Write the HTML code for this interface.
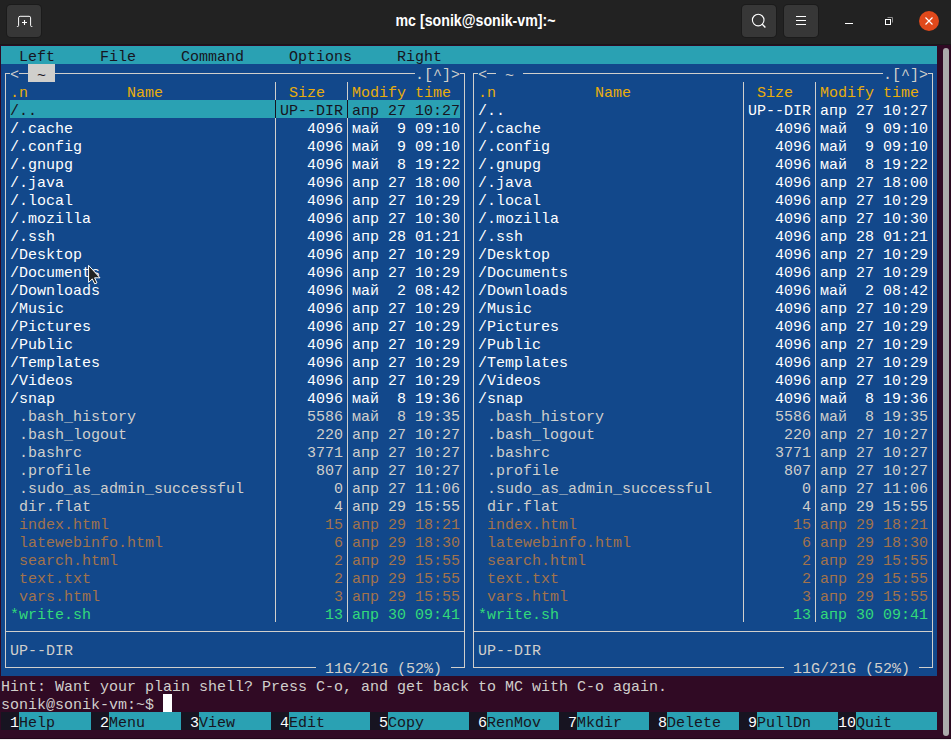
<!DOCTYPE html>
<html><head><meta charset="utf-8"><title>mc</title>
<style>
html,body{margin:0;padding:0;}
body{width:951px;height:740px;overflow:hidden;background:#300A24;position:relative;font-family:"Liberation Mono",monospace;}
.b{position:absolute;}
.t{position:absolute;white-space:pre;font-family:"Liberation Mono",monospace;font-size:15px;line-height:18px;height:18px;padding-top:3px;box-sizing:content-box;letter-spacing:0;}
#tb{position:absolute;left:0;top:0;width:951px;height:44px;background:#222222;}
#tbl{position:absolute;left:0;top:44px;width:951px;height:1px;background:#181818;}
.btn{position:absolute;top:5px;width:34px;height:32px;background:#373737;border-radius:4px;box-shadow:0 0 0 1px #1b1b1b;}
#title{position:absolute;left:0;width:951px;top:11px;text-align:center;font-family:"Liberation Sans",sans-serif;font-weight:bold;font-size:16px;line-height:20px;color:#fff;transform:scaleX(0.887);transform-origin:475.8px 0;}
svg{position:absolute;left:0;top:0;}
</style></head><body>
<div id="tb"></div><div id="tbl"></div>
<div class="btn" style="left:7px"></div>
<div class="btn" style="left:742px"></div>
<div class="btn" style="left:784px"></div>
<div id="title">mc [sonik@sonik-vm]:~</div>
<svg width="951" height="46" viewBox="0 0 951 46" fill="none" stroke="#fff" stroke-width="1.1">
<path d="M16.9 26.5h.7q1 0 1-1v-7.7q0-1.5 1.5-1.5h9q1.5 0 1.5 1.5v7.7q0 1 1 1h.7" stroke-width="1"/>
<path d="M22 22.5h5M24.5 20v5"/>
<circle cx="758.2" cy="20.1" r="5.8"/>
<path d="M762.2 24.2l3.2 3.2" stroke-width="1.4"/>
<path d="M796 16.5h10M796 20.5h10M796 24.5h10" stroke-width="1"/>
<path d="M845 23.5h8" stroke-width="1"/>
<path d="M887.5 17.5h5v5" stroke="#8a8a8a" stroke-width="1"/>
<rect x="885.5" y="19.5" width="5" height="5" stroke-width="1"/>
<circle cx="929" cy="21" r="10" fill="#E0491B" stroke="none"/>
<path d="M925.5 17.5l7 7M932.5 17.5l-7 7" stroke-width="1.15"/>
</svg>
<div class="b" style="left:1px;top:46px;width:936px;height:18px;background:#2AA1B3"></div>
<div class="b" style="left:1px;top:64px;width:27px;height:18px;background:#12488B"></div>
<div class="b" style="left:28px;top:64px;width:27px;height:18px;background:#D0CFCC"></div>
<div class="b" style="left:55px;top:64px;width:882px;height:18px;background:#12488B"></div>
<div class="b" style="left:1px;top:82px;width:936px;height:18px;background:#12488B"></div>
<div class="b" style="left:1px;top:100px;width:9px;height:18px;background:#12488B"></div>
<div class="b" style="left:10px;top:100px;width:450px;height:18px;background:#2AA1B3"></div>
<div class="b" style="left:460px;top:100px;width:477px;height:18px;background:#12488B"></div>
<div class="b" style="left:1px;top:118px;width:936px;height:18px;background:#12488B"></div>
<div class="b" style="left:1px;top:136px;width:936px;height:18px;background:#12488B"></div>
<div class="b" style="left:1px;top:154px;width:936px;height:18px;background:#12488B"></div>
<div class="b" style="left:1px;top:172px;width:936px;height:18px;background:#12488B"></div>
<div class="b" style="left:1px;top:190px;width:936px;height:18px;background:#12488B"></div>
<div class="b" style="left:1px;top:208px;width:936px;height:18px;background:#12488B"></div>
<div class="b" style="left:1px;top:226px;width:936px;height:18px;background:#12488B"></div>
<div class="b" style="left:1px;top:244px;width:936px;height:18px;background:#12488B"></div>
<div class="b" style="left:1px;top:262px;width:936px;height:18px;background:#12488B"></div>
<div class="b" style="left:1px;top:280px;width:936px;height:18px;background:#12488B"></div>
<div class="b" style="left:1px;top:298px;width:936px;height:18px;background:#12488B"></div>
<div class="b" style="left:1px;top:316px;width:936px;height:18px;background:#12488B"></div>
<div class="b" style="left:1px;top:334px;width:936px;height:18px;background:#12488B"></div>
<div class="b" style="left:1px;top:352px;width:936px;height:18px;background:#12488B"></div>
<div class="b" style="left:1px;top:370px;width:936px;height:18px;background:#12488B"></div>
<div class="b" style="left:1px;top:388px;width:936px;height:18px;background:#12488B"></div>
<div class="b" style="left:1px;top:406px;width:936px;height:18px;background:#12488B"></div>
<div class="b" style="left:1px;top:424px;width:936px;height:18px;background:#12488B"></div>
<div class="b" style="left:1px;top:442px;width:936px;height:18px;background:#12488B"></div>
<div class="b" style="left:1px;top:460px;width:936px;height:18px;background:#12488B"></div>
<div class="b" style="left:1px;top:478px;width:936px;height:18px;background:#12488B"></div>
<div class="b" style="left:1px;top:496px;width:936px;height:18px;background:#12488B"></div>
<div class="b" style="left:1px;top:514px;width:936px;height:18px;background:#12488B"></div>
<div class="b" style="left:1px;top:532px;width:936px;height:18px;background:#12488B"></div>
<div class="b" style="left:1px;top:550px;width:936px;height:18px;background:#12488B"></div>
<div class="b" style="left:1px;top:568px;width:936px;height:18px;background:#12488B"></div>
<div class="b" style="left:1px;top:586px;width:936px;height:18px;background:#12488B"></div>
<div class="b" style="left:1px;top:604px;width:936px;height:18px;background:#12488B"></div>
<div class="b" style="left:1px;top:622px;width:936px;height:18px;background:#12488B"></div>
<div class="b" style="left:1px;top:640px;width:936px;height:18px;background:#12488B"></div>
<div class="b" style="left:1px;top:658px;width:936px;height:18px;background:#12488B"></div>
<div class="b" style="left:163px;top:694px;width:9px;height:18px;background:#FFFFFF"></div>
<div class="b" style="left:1px;top:712px;width:18px;height:18px;background:#171421"></div>
<div class="b" style="left:19px;top:712px;width:72px;height:18px;background:#2AA1B3"></div>
<div class="b" style="left:91px;top:712px;width:18px;height:18px;background:#171421"></div>
<div class="b" style="left:109px;top:712px;width:72px;height:18px;background:#2AA1B3"></div>
<div class="b" style="left:181px;top:712px;width:18px;height:18px;background:#171421"></div>
<div class="b" style="left:199px;top:712px;width:72px;height:18px;background:#2AA1B3"></div>
<div class="b" style="left:271px;top:712px;width:18px;height:18px;background:#171421"></div>
<div class="b" style="left:289px;top:712px;width:81px;height:18px;background:#2AA1B3"></div>
<div class="b" style="left:370px;top:712px;width:18px;height:18px;background:#171421"></div>
<div class="b" style="left:388px;top:712px;width:81px;height:18px;background:#2AA1B3"></div>
<div class="b" style="left:469px;top:712px;width:18px;height:18px;background:#171421"></div>
<div class="b" style="left:487px;top:712px;width:72px;height:18px;background:#2AA1B3"></div>
<div class="b" style="left:559px;top:712px;width:18px;height:18px;background:#171421"></div>
<div class="b" style="left:577px;top:712px;width:72px;height:18px;background:#2AA1B3"></div>
<div class="b" style="left:649px;top:712px;width:18px;height:18px;background:#171421"></div>
<div class="b" style="left:667px;top:712px;width:72px;height:18px;background:#2AA1B3"></div>
<div class="b" style="left:739px;top:712px;width:18px;height:18px;background:#171421"></div>
<div class="b" style="left:757px;top:712px;width:81px;height:18px;background:#2AA1B3"></div>
<div class="b" style="left:838px;top:712px;width:18px;height:18px;background:#171421"></div>
<div class="b" style="left:856px;top:712px;width:81px;height:18px;background:#2AA1B3"></div>
<div class="b" style="left:5px;top:73px;width:5px;height:1px;background:#D0CFCC"></div>
<div class="b" style="left:5px;top:73px;width:1px;height:9px;background:#D0CFCC"></div>
<div class="b" style="left:19px;top:73px;width:9px;height:1px;background:#D0CFCC"></div>
<div class="b" style="left:55px;top:73px;width:360px;height:1px;background:#D0CFCC"></div>
<div class="b" style="left:460px;top:73px;width:5px;height:1px;background:#D0CFCC"></div>
<div class="b" style="left:464px;top:73px;width:1px;height:9px;background:#D0CFCC"></div>
<div class="b" style="left:5px;top:82px;width:1px;height:576px;background:#D0CFCC"></div>
<div class="b" style="left:464px;top:82px;width:1px;height:576px;background:#D0CFCC"></div>
<div class="b" style="left:275px;top:82px;width:1px;height:18px;background:#D0CFCC"></div>
<div class="b" style="left:347px;top:82px;width:1px;height:18px;background:#D0CFCC"></div>
<div class="b" style="left:275px;top:100px;width:1px;height:18px;background:#171421"></div>
<div class="b" style="left:347px;top:100px;width:1px;height:18px;background:#171421"></div>
<div class="b" style="left:275px;top:118px;width:1px;height:18px;background:#D0CFCC"></div>
<div class="b" style="left:347px;top:118px;width:1px;height:18px;background:#D0CFCC"></div>
<div class="b" style="left:275px;top:136px;width:1px;height:18px;background:#D0CFCC"></div>
<div class="b" style="left:347px;top:136px;width:1px;height:18px;background:#D0CFCC"></div>
<div class="b" style="left:275px;top:154px;width:1px;height:18px;background:#D0CFCC"></div>
<div class="b" style="left:347px;top:154px;width:1px;height:18px;background:#D0CFCC"></div>
<div class="b" style="left:275px;top:172px;width:1px;height:18px;background:#D0CFCC"></div>
<div class="b" style="left:347px;top:172px;width:1px;height:18px;background:#D0CFCC"></div>
<div class="b" style="left:275px;top:190px;width:1px;height:18px;background:#D0CFCC"></div>
<div class="b" style="left:347px;top:190px;width:1px;height:18px;background:#D0CFCC"></div>
<div class="b" style="left:275px;top:208px;width:1px;height:18px;background:#D0CFCC"></div>
<div class="b" style="left:347px;top:208px;width:1px;height:18px;background:#D0CFCC"></div>
<div class="b" style="left:275px;top:226px;width:1px;height:18px;background:#D0CFCC"></div>
<div class="b" style="left:347px;top:226px;width:1px;height:18px;background:#D0CFCC"></div>
<div class="b" style="left:275px;top:244px;width:1px;height:18px;background:#D0CFCC"></div>
<div class="b" style="left:347px;top:244px;width:1px;height:18px;background:#D0CFCC"></div>
<div class="b" style="left:275px;top:262px;width:1px;height:18px;background:#D0CFCC"></div>
<div class="b" style="left:347px;top:262px;width:1px;height:18px;background:#D0CFCC"></div>
<div class="b" style="left:275px;top:280px;width:1px;height:18px;background:#D0CFCC"></div>
<div class="b" style="left:347px;top:280px;width:1px;height:18px;background:#D0CFCC"></div>
<div class="b" style="left:275px;top:298px;width:1px;height:18px;background:#D0CFCC"></div>
<div class="b" style="left:347px;top:298px;width:1px;height:18px;background:#D0CFCC"></div>
<div class="b" style="left:275px;top:316px;width:1px;height:18px;background:#D0CFCC"></div>
<div class="b" style="left:347px;top:316px;width:1px;height:18px;background:#D0CFCC"></div>
<div class="b" style="left:275px;top:334px;width:1px;height:18px;background:#D0CFCC"></div>
<div class="b" style="left:347px;top:334px;width:1px;height:18px;background:#D0CFCC"></div>
<div class="b" style="left:275px;top:352px;width:1px;height:18px;background:#D0CFCC"></div>
<div class="b" style="left:347px;top:352px;width:1px;height:18px;background:#D0CFCC"></div>
<div class="b" style="left:275px;top:370px;width:1px;height:18px;background:#D0CFCC"></div>
<div class="b" style="left:347px;top:370px;width:1px;height:18px;background:#D0CFCC"></div>
<div class="b" style="left:275px;top:388px;width:1px;height:18px;background:#D0CFCC"></div>
<div class="b" style="left:347px;top:388px;width:1px;height:18px;background:#D0CFCC"></div>
<div class="b" style="left:275px;top:406px;width:1px;height:18px;background:#D0CFCC"></div>
<div class="b" style="left:347px;top:406px;width:1px;height:18px;background:#D0CFCC"></div>
<div class="b" style="left:275px;top:424px;width:1px;height:18px;background:#D0CFCC"></div>
<div class="b" style="left:347px;top:424px;width:1px;height:18px;background:#D0CFCC"></div>
<div class="b" style="left:275px;top:442px;width:1px;height:18px;background:#D0CFCC"></div>
<div class="b" style="left:347px;top:442px;width:1px;height:18px;background:#D0CFCC"></div>
<div class="b" style="left:275px;top:460px;width:1px;height:18px;background:#D0CFCC"></div>
<div class="b" style="left:347px;top:460px;width:1px;height:18px;background:#D0CFCC"></div>
<div class="b" style="left:275px;top:478px;width:1px;height:18px;background:#D0CFCC"></div>
<div class="b" style="left:347px;top:478px;width:1px;height:18px;background:#D0CFCC"></div>
<div class="b" style="left:275px;top:496px;width:1px;height:18px;background:#D0CFCC"></div>
<div class="b" style="left:347px;top:496px;width:1px;height:18px;background:#D0CFCC"></div>
<div class="b" style="left:275px;top:514px;width:1px;height:18px;background:#D0CFCC"></div>
<div class="b" style="left:347px;top:514px;width:1px;height:18px;background:#D0CFCC"></div>
<div class="b" style="left:275px;top:532px;width:1px;height:18px;background:#D0CFCC"></div>
<div class="b" style="left:347px;top:532px;width:1px;height:18px;background:#D0CFCC"></div>
<div class="b" style="left:275px;top:550px;width:1px;height:18px;background:#D0CFCC"></div>
<div class="b" style="left:347px;top:550px;width:1px;height:18px;background:#D0CFCC"></div>
<div class="b" style="left:275px;top:568px;width:1px;height:18px;background:#D0CFCC"></div>
<div class="b" style="left:347px;top:568px;width:1px;height:18px;background:#D0CFCC"></div>
<div class="b" style="left:275px;top:586px;width:1px;height:18px;background:#D0CFCC"></div>
<div class="b" style="left:347px;top:586px;width:1px;height:18px;background:#D0CFCC"></div>
<div class="b" style="left:275px;top:604px;width:1px;height:18px;background:#D0CFCC"></div>
<div class="b" style="left:347px;top:604px;width:1px;height:18px;background:#D0CFCC"></div>
<div class="b" style="left:5px;top:631px;width:460px;height:1px;background:#D0CFCC"></div>
<div class="b" style="left:5px;top:658px;width:1px;height:10px;background:#D0CFCC"></div>
<div class="b" style="left:5px;top:667px;width:311px;height:1px;background:#D0CFCC"></div>
<div class="b" style="left:451px;top:667px;width:14px;height:1px;background:#D0CFCC"></div>
<div class="b" style="left:464px;top:658px;width:1px;height:10px;background:#D0CFCC"></div>
<div class="b" style="left:473px;top:73px;width:5px;height:1px;background:#D0CFCC"></div>
<div class="b" style="left:473px;top:73px;width:1px;height:9px;background:#D0CFCC"></div>
<div class="b" style="left:487px;top:73px;width:9px;height:1px;background:#D0CFCC"></div>
<div class="b" style="left:523px;top:73px;width:360px;height:1px;background:#D0CFCC"></div>
<div class="b" style="left:928px;top:73px;width:5px;height:1px;background:#D0CFCC"></div>
<div class="b" style="left:932px;top:73px;width:1px;height:9px;background:#D0CFCC"></div>
<div class="b" style="left:473px;top:82px;width:1px;height:576px;background:#D0CFCC"></div>
<div class="b" style="left:932px;top:82px;width:1px;height:576px;background:#D0CFCC"></div>
<div class="b" style="left:743px;top:82px;width:1px;height:18px;background:#D0CFCC"></div>
<div class="b" style="left:815px;top:82px;width:1px;height:18px;background:#D0CFCC"></div>
<div class="b" style="left:743px;top:100px;width:1px;height:18px;background:#D0CFCC"></div>
<div class="b" style="left:815px;top:100px;width:1px;height:18px;background:#D0CFCC"></div>
<div class="b" style="left:743px;top:118px;width:1px;height:18px;background:#D0CFCC"></div>
<div class="b" style="left:815px;top:118px;width:1px;height:18px;background:#D0CFCC"></div>
<div class="b" style="left:743px;top:136px;width:1px;height:18px;background:#D0CFCC"></div>
<div class="b" style="left:815px;top:136px;width:1px;height:18px;background:#D0CFCC"></div>
<div class="b" style="left:743px;top:154px;width:1px;height:18px;background:#D0CFCC"></div>
<div class="b" style="left:815px;top:154px;width:1px;height:18px;background:#D0CFCC"></div>
<div class="b" style="left:743px;top:172px;width:1px;height:18px;background:#D0CFCC"></div>
<div class="b" style="left:815px;top:172px;width:1px;height:18px;background:#D0CFCC"></div>
<div class="b" style="left:743px;top:190px;width:1px;height:18px;background:#D0CFCC"></div>
<div class="b" style="left:815px;top:190px;width:1px;height:18px;background:#D0CFCC"></div>
<div class="b" style="left:743px;top:208px;width:1px;height:18px;background:#D0CFCC"></div>
<div class="b" style="left:815px;top:208px;width:1px;height:18px;background:#D0CFCC"></div>
<div class="b" style="left:743px;top:226px;width:1px;height:18px;background:#D0CFCC"></div>
<div class="b" style="left:815px;top:226px;width:1px;height:18px;background:#D0CFCC"></div>
<div class="b" style="left:743px;top:244px;width:1px;height:18px;background:#D0CFCC"></div>
<div class="b" style="left:815px;top:244px;width:1px;height:18px;background:#D0CFCC"></div>
<div class="b" style="left:743px;top:262px;width:1px;height:18px;background:#D0CFCC"></div>
<div class="b" style="left:815px;top:262px;width:1px;height:18px;background:#D0CFCC"></div>
<div class="b" style="left:743px;top:280px;width:1px;height:18px;background:#D0CFCC"></div>
<div class="b" style="left:815px;top:280px;width:1px;height:18px;background:#D0CFCC"></div>
<div class="b" style="left:743px;top:298px;width:1px;height:18px;background:#D0CFCC"></div>
<div class="b" style="left:815px;top:298px;width:1px;height:18px;background:#D0CFCC"></div>
<div class="b" style="left:743px;top:316px;width:1px;height:18px;background:#D0CFCC"></div>
<div class="b" style="left:815px;top:316px;width:1px;height:18px;background:#D0CFCC"></div>
<div class="b" style="left:743px;top:334px;width:1px;height:18px;background:#D0CFCC"></div>
<div class="b" style="left:815px;top:334px;width:1px;height:18px;background:#D0CFCC"></div>
<div class="b" style="left:743px;top:352px;width:1px;height:18px;background:#D0CFCC"></div>
<div class="b" style="left:815px;top:352px;width:1px;height:18px;background:#D0CFCC"></div>
<div class="b" style="left:743px;top:370px;width:1px;height:18px;background:#D0CFCC"></div>
<div class="b" style="left:815px;top:370px;width:1px;height:18px;background:#D0CFCC"></div>
<div class="b" style="left:743px;top:388px;width:1px;height:18px;background:#D0CFCC"></div>
<div class="b" style="left:815px;top:388px;width:1px;height:18px;background:#D0CFCC"></div>
<div class="b" style="left:743px;top:406px;width:1px;height:18px;background:#D0CFCC"></div>
<div class="b" style="left:815px;top:406px;width:1px;height:18px;background:#D0CFCC"></div>
<div class="b" style="left:743px;top:424px;width:1px;height:18px;background:#D0CFCC"></div>
<div class="b" style="left:815px;top:424px;width:1px;height:18px;background:#D0CFCC"></div>
<div class="b" style="left:743px;top:442px;width:1px;height:18px;background:#D0CFCC"></div>
<div class="b" style="left:815px;top:442px;width:1px;height:18px;background:#D0CFCC"></div>
<div class="b" style="left:743px;top:460px;width:1px;height:18px;background:#D0CFCC"></div>
<div class="b" style="left:815px;top:460px;width:1px;height:18px;background:#D0CFCC"></div>
<div class="b" style="left:743px;top:478px;width:1px;height:18px;background:#D0CFCC"></div>
<div class="b" style="left:815px;top:478px;width:1px;height:18px;background:#D0CFCC"></div>
<div class="b" style="left:743px;top:496px;width:1px;height:18px;background:#D0CFCC"></div>
<div class="b" style="left:815px;top:496px;width:1px;height:18px;background:#D0CFCC"></div>
<div class="b" style="left:743px;top:514px;width:1px;height:18px;background:#D0CFCC"></div>
<div class="b" style="left:815px;top:514px;width:1px;height:18px;background:#D0CFCC"></div>
<div class="b" style="left:743px;top:532px;width:1px;height:18px;background:#D0CFCC"></div>
<div class="b" style="left:815px;top:532px;width:1px;height:18px;background:#D0CFCC"></div>
<div class="b" style="left:743px;top:550px;width:1px;height:18px;background:#D0CFCC"></div>
<div class="b" style="left:815px;top:550px;width:1px;height:18px;background:#D0CFCC"></div>
<div class="b" style="left:743px;top:568px;width:1px;height:18px;background:#D0CFCC"></div>
<div class="b" style="left:815px;top:568px;width:1px;height:18px;background:#D0CFCC"></div>
<div class="b" style="left:743px;top:586px;width:1px;height:18px;background:#D0CFCC"></div>
<div class="b" style="left:815px;top:586px;width:1px;height:18px;background:#D0CFCC"></div>
<div class="b" style="left:743px;top:604px;width:1px;height:18px;background:#D0CFCC"></div>
<div class="b" style="left:815px;top:604px;width:1px;height:18px;background:#D0CFCC"></div>
<div class="b" style="left:473px;top:631px;width:460px;height:1px;background:#D0CFCC"></div>
<div class="b" style="left:473px;top:658px;width:1px;height:10px;background:#D0CFCC"></div>
<div class="b" style="left:473px;top:667px;width:311px;height:1px;background:#D0CFCC"></div>
<div class="b" style="left:919px;top:667px;width:14px;height:1px;background:#D0CFCC"></div>
<div class="b" style="left:932px;top:658px;width:1px;height:10px;background:#D0CFCC"></div>
<div class="t" style="left:19px;top:46px;color:#171421">Left</div>
<div class="t" style="left:100px;top:46px;color:#171421">File</div>
<div class="t" style="left:181px;top:46px;color:#171421">Command</div>
<div class="t" style="left:289px;top:46px;color:#171421">Options</div>
<div class="t" style="left:397px;top:46px;color:#171421">Right</div>
<div class="t" style="left:10px;top:64px;color:#D0CFCC">&lt;</div>
<div class="t" style="left:37px;top:65px;color:#171421">~</div>
<div class="t" style="left:415px;top:64px;color:#D0CFCC">.[^]&gt;</div>
<div class="t" style="left:478px;top:64px;color:#D0CFCC">&lt;</div>
<div class="t" style="left:505px;top:65px;color:#D0CFCC">~</div>
<div class="t" style="left:883px;top:64px;color:#D0CFCC">.[^]&gt;</div>
<div class="t" style="left:10px;top:82px;color:#E9AD0C">.n</div>
<div class="t" style="left:127px;top:82px;color:#E9AD0C">Name</div>
<div class="t" style="left:289px;top:82px;color:#E9AD0C">Size</div>
<div class="t" style="left:352px;top:82px;color:#E9AD0C">Modify time</div>
<div class="t" style="left:478px;top:82px;color:#E9AD0C">.n</div>
<div class="t" style="left:595px;top:82px;color:#E9AD0C">Name</div>
<div class="t" style="left:757px;top:82px;color:#E9AD0C">Size</div>
<div class="t" style="left:820px;top:82px;color:#E9AD0C">Modify time</div>
<div class="t" style="left:10px;top:100px;color:#171421">/..</div>
<div class="t" style="left:280px;top:100px;color:#171421">UP--DIR апр 27 10:27</div>
<div class="t" style="left:478px;top:100px;color:#FFFFFF">/..</div>
<div class="t" style="left:748px;top:100px;color:#FFFFFF">UP--DIR</div>
<div class="t" style="left:820px;top:100px;color:#FFFFFF">апр 27 10:27</div>
<div class="t" style="left:10px;top:118px;color:#FFFFFF">/.cache</div>
<div class="t" style="left:307px;top:118px;color:#FFFFFF">4096</div>
<div class="t" style="left:352px;top:118px;color:#FFFFFF">май</div>
<div class="t" style="left:397px;top:118px;color:#FFFFFF">9 09:10</div>
<div class="t" style="left:478px;top:118px;color:#FFFFFF">/.cache</div>
<div class="t" style="left:775px;top:118px;color:#FFFFFF">4096</div>
<div class="t" style="left:820px;top:118px;color:#FFFFFF">май</div>
<div class="t" style="left:865px;top:118px;color:#FFFFFF">9 09:10</div>
<div class="t" style="left:10px;top:136px;color:#FFFFFF">/.config</div>
<div class="t" style="left:307px;top:136px;color:#FFFFFF">4096</div>
<div class="t" style="left:352px;top:136px;color:#FFFFFF">май</div>
<div class="t" style="left:397px;top:136px;color:#FFFFFF">9 09:10</div>
<div class="t" style="left:478px;top:136px;color:#FFFFFF">/.config</div>
<div class="t" style="left:775px;top:136px;color:#FFFFFF">4096</div>
<div class="t" style="left:820px;top:136px;color:#FFFFFF">май</div>
<div class="t" style="left:865px;top:136px;color:#FFFFFF">9 09:10</div>
<div class="t" style="left:10px;top:154px;color:#FFFFFF">/.gnupg</div>
<div class="t" style="left:307px;top:154px;color:#FFFFFF">4096</div>
<div class="t" style="left:352px;top:154px;color:#FFFFFF">май</div>
<div class="t" style="left:397px;top:154px;color:#FFFFFF">8 19:22</div>
<div class="t" style="left:478px;top:154px;color:#FFFFFF">/.gnupg</div>
<div class="t" style="left:775px;top:154px;color:#FFFFFF">4096</div>
<div class="t" style="left:820px;top:154px;color:#FFFFFF">май</div>
<div class="t" style="left:865px;top:154px;color:#FFFFFF">8 19:22</div>
<div class="t" style="left:10px;top:172px;color:#FFFFFF">/.java</div>
<div class="t" style="left:307px;top:172px;color:#FFFFFF">4096</div>
<div class="t" style="left:352px;top:172px;color:#FFFFFF">апр 27 18:00</div>
<div class="t" style="left:478px;top:172px;color:#FFFFFF">/.java</div>
<div class="t" style="left:775px;top:172px;color:#FFFFFF">4096</div>
<div class="t" style="left:820px;top:172px;color:#FFFFFF">апр 27 18:00</div>
<div class="t" style="left:10px;top:190px;color:#FFFFFF">/.local</div>
<div class="t" style="left:307px;top:190px;color:#FFFFFF">4096</div>
<div class="t" style="left:352px;top:190px;color:#FFFFFF">апр 27 10:29</div>
<div class="t" style="left:478px;top:190px;color:#FFFFFF">/.local</div>
<div class="t" style="left:775px;top:190px;color:#FFFFFF">4096</div>
<div class="t" style="left:820px;top:190px;color:#FFFFFF">апр 27 10:29</div>
<div class="t" style="left:10px;top:208px;color:#FFFFFF">/.mozilla</div>
<div class="t" style="left:307px;top:208px;color:#FFFFFF">4096</div>
<div class="t" style="left:352px;top:208px;color:#FFFFFF">апр 27 10:30</div>
<div class="t" style="left:478px;top:208px;color:#FFFFFF">/.mozilla</div>
<div class="t" style="left:775px;top:208px;color:#FFFFFF">4096</div>
<div class="t" style="left:820px;top:208px;color:#FFFFFF">апр 27 10:30</div>
<div class="t" style="left:10px;top:226px;color:#FFFFFF">/.ssh</div>
<div class="t" style="left:307px;top:226px;color:#FFFFFF">4096</div>
<div class="t" style="left:352px;top:226px;color:#FFFFFF">апр 28 01:21</div>
<div class="t" style="left:478px;top:226px;color:#FFFFFF">/.ssh</div>
<div class="t" style="left:775px;top:226px;color:#FFFFFF">4096</div>
<div class="t" style="left:820px;top:226px;color:#FFFFFF">апр 28 01:21</div>
<div class="t" style="left:10px;top:244px;color:#FFFFFF">/Desktop</div>
<div class="t" style="left:307px;top:244px;color:#FFFFFF">4096</div>
<div class="t" style="left:352px;top:244px;color:#FFFFFF">апр 27 10:29</div>
<div class="t" style="left:478px;top:244px;color:#FFFFFF">/Desktop</div>
<div class="t" style="left:775px;top:244px;color:#FFFFFF">4096</div>
<div class="t" style="left:820px;top:244px;color:#FFFFFF">апр 27 10:29</div>
<div class="t" style="left:10px;top:262px;color:#FFFFFF">/Documents</div>
<div class="t" style="left:307px;top:262px;color:#FFFFFF">4096</div>
<div class="t" style="left:352px;top:262px;color:#FFFFFF">апр 27 10:29</div>
<div class="t" style="left:478px;top:262px;color:#FFFFFF">/Documents</div>
<div class="t" style="left:775px;top:262px;color:#FFFFFF">4096</div>
<div class="t" style="left:820px;top:262px;color:#FFFFFF">апр 27 10:29</div>
<div class="t" style="left:10px;top:280px;color:#FFFFFF">/Downloads</div>
<div class="t" style="left:307px;top:280px;color:#FFFFFF">4096</div>
<div class="t" style="left:352px;top:280px;color:#FFFFFF">май</div>
<div class="t" style="left:397px;top:280px;color:#FFFFFF">2 08:42</div>
<div class="t" style="left:478px;top:280px;color:#FFFFFF">/Downloads</div>
<div class="t" style="left:775px;top:280px;color:#FFFFFF">4096</div>
<div class="t" style="left:820px;top:280px;color:#FFFFFF">май</div>
<div class="t" style="left:865px;top:280px;color:#FFFFFF">2 08:42</div>
<div class="t" style="left:10px;top:298px;color:#FFFFFF">/Music</div>
<div class="t" style="left:307px;top:298px;color:#FFFFFF">4096</div>
<div class="t" style="left:352px;top:298px;color:#FFFFFF">апр 27 10:29</div>
<div class="t" style="left:478px;top:298px;color:#FFFFFF">/Music</div>
<div class="t" style="left:775px;top:298px;color:#FFFFFF">4096</div>
<div class="t" style="left:820px;top:298px;color:#FFFFFF">апр 27 10:29</div>
<div class="t" style="left:10px;top:316px;color:#FFFFFF">/Pictures</div>
<div class="t" style="left:307px;top:316px;color:#FFFFFF">4096</div>
<div class="t" style="left:352px;top:316px;color:#FFFFFF">апр 27 10:29</div>
<div class="t" style="left:478px;top:316px;color:#FFFFFF">/Pictures</div>
<div class="t" style="left:775px;top:316px;color:#FFFFFF">4096</div>
<div class="t" style="left:820px;top:316px;color:#FFFFFF">апр 27 10:29</div>
<div class="t" style="left:10px;top:334px;color:#FFFFFF">/Public</div>
<div class="t" style="left:307px;top:334px;color:#FFFFFF">4096</div>
<div class="t" style="left:352px;top:334px;color:#FFFFFF">апр 27 10:29</div>
<div class="t" style="left:478px;top:334px;color:#FFFFFF">/Public</div>
<div class="t" style="left:775px;top:334px;color:#FFFFFF">4096</div>
<div class="t" style="left:820px;top:334px;color:#FFFFFF">апр 27 10:29</div>
<div class="t" style="left:10px;top:352px;color:#FFFFFF">/Templates</div>
<div class="t" style="left:307px;top:352px;color:#FFFFFF">4096</div>
<div class="t" style="left:352px;top:352px;color:#FFFFFF">апр 27 10:29</div>
<div class="t" style="left:478px;top:352px;color:#FFFFFF">/Templates</div>
<div class="t" style="left:775px;top:352px;color:#FFFFFF">4096</div>
<div class="t" style="left:820px;top:352px;color:#FFFFFF">апр 27 10:29</div>
<div class="t" style="left:10px;top:370px;color:#FFFFFF">/Videos</div>
<div class="t" style="left:307px;top:370px;color:#FFFFFF">4096</div>
<div class="t" style="left:352px;top:370px;color:#FFFFFF">апр 27 10:29</div>
<div class="t" style="left:478px;top:370px;color:#FFFFFF">/Videos</div>
<div class="t" style="left:775px;top:370px;color:#FFFFFF">4096</div>
<div class="t" style="left:820px;top:370px;color:#FFFFFF">апр 27 10:29</div>
<div class="t" style="left:10px;top:388px;color:#FFFFFF">/snap</div>
<div class="t" style="left:307px;top:388px;color:#FFFFFF">4096</div>
<div class="t" style="left:352px;top:388px;color:#FFFFFF">май</div>
<div class="t" style="left:397px;top:388px;color:#FFFFFF">8 19:36</div>
<div class="t" style="left:478px;top:388px;color:#FFFFFF">/snap</div>
<div class="t" style="left:775px;top:388px;color:#FFFFFF">4096</div>
<div class="t" style="left:820px;top:388px;color:#FFFFFF">май</div>
<div class="t" style="left:865px;top:388px;color:#FFFFFF">8 19:36</div>
<div class="t" style="left:19px;top:406px;color:#D0CFCC">.bash_history</div>
<div class="t" style="left:307px;top:406px;color:#D0CFCC">5586 май</div>
<div class="t" style="left:397px;top:406px;color:#D0CFCC">8 19:35</div>
<div class="t" style="left:487px;top:406px;color:#D0CFCC">.bash_history</div>
<div class="t" style="left:775px;top:406px;color:#D0CFCC">5586 май</div>
<div class="t" style="left:865px;top:406px;color:#D0CFCC">8 19:35</div>
<div class="t" style="left:19px;top:424px;color:#D0CFCC">.bash_logout</div>
<div class="t" style="left:316px;top:424px;color:#D0CFCC">220 апр 27 10:27</div>
<div class="t" style="left:487px;top:424px;color:#D0CFCC">.bash_logout</div>
<div class="t" style="left:784px;top:424px;color:#D0CFCC">220 апр 27 10:27</div>
<div class="t" style="left:19px;top:442px;color:#D0CFCC">.bashrc</div>
<div class="t" style="left:307px;top:442px;color:#D0CFCC">3771 апр 27 10:27</div>
<div class="t" style="left:487px;top:442px;color:#D0CFCC">.bashrc</div>
<div class="t" style="left:775px;top:442px;color:#D0CFCC">3771 апр 27 10:27</div>
<div class="t" style="left:19px;top:460px;color:#D0CFCC">.profile</div>
<div class="t" style="left:316px;top:460px;color:#D0CFCC">807 апр 27 10:27</div>
<div class="t" style="left:487px;top:460px;color:#D0CFCC">.profile</div>
<div class="t" style="left:784px;top:460px;color:#D0CFCC">807 апр 27 10:27</div>
<div class="t" style="left:19px;top:478px;color:#D0CFCC">.sudo_as_admin_successful</div>
<div class="t" style="left:334px;top:478px;color:#D0CFCC">0 апр 27 11:06</div>
<div class="t" style="left:487px;top:478px;color:#D0CFCC">.sudo_as_admin_successful</div>
<div class="t" style="left:802px;top:478px;color:#D0CFCC">0 апр 27 11:06</div>
<div class="t" style="left:19px;top:496px;color:#D0CFCC">dir.flat</div>
<div class="t" style="left:334px;top:496px;color:#D0CFCC">4 апр 29 15:55</div>
<div class="t" style="left:487px;top:496px;color:#D0CFCC">dir.flat</div>
<div class="t" style="left:802px;top:496px;color:#D0CFCC">4 апр 29 15:55</div>
<div class="t" style="left:19px;top:514px;color:#A2734C">index.html</div>
<div class="t" style="left:325px;top:514px;color:#A2734C">15</div>
<div class="t" style="left:352px;top:514px;color:#A2734C">апр 29 18:21</div>
<div class="t" style="left:487px;top:514px;color:#A2734C">index.html</div>
<div class="t" style="left:793px;top:514px;color:#A2734C">15</div>
<div class="t" style="left:820px;top:514px;color:#A2734C">апр 29 18:21</div>
<div class="t" style="left:19px;top:532px;color:#A2734C">latewebinfo.html</div>
<div class="t" style="left:334px;top:532px;color:#A2734C">6</div>
<div class="t" style="left:352px;top:532px;color:#A2734C">апр 29 18:30</div>
<div class="t" style="left:487px;top:532px;color:#A2734C">latewebinfo.html</div>
<div class="t" style="left:802px;top:532px;color:#A2734C">6</div>
<div class="t" style="left:820px;top:532px;color:#A2734C">апр 29 18:30</div>
<div class="t" style="left:19px;top:550px;color:#A2734C">search.html</div>
<div class="t" style="left:334px;top:550px;color:#A2734C">2</div>
<div class="t" style="left:352px;top:550px;color:#A2734C">апр 29 15:55</div>
<div class="t" style="left:487px;top:550px;color:#A2734C">search.html</div>
<div class="t" style="left:802px;top:550px;color:#A2734C">2</div>
<div class="t" style="left:820px;top:550px;color:#A2734C">апр 29 15:55</div>
<div class="t" style="left:19px;top:568px;color:#A2734C">text.txt</div>
<div class="t" style="left:334px;top:568px;color:#A2734C">2</div>
<div class="t" style="left:352px;top:568px;color:#A2734C">апр 29 15:55</div>
<div class="t" style="left:487px;top:568px;color:#A2734C">text.txt</div>
<div class="t" style="left:802px;top:568px;color:#A2734C">2</div>
<div class="t" style="left:820px;top:568px;color:#A2734C">апр 29 15:55</div>
<div class="t" style="left:19px;top:586px;color:#A2734C">vars.html</div>
<div class="t" style="left:334px;top:586px;color:#A2734C">3</div>
<div class="t" style="left:352px;top:586px;color:#A2734C">апр 29 15:55</div>
<div class="t" style="left:487px;top:586px;color:#A2734C">vars.html</div>
<div class="t" style="left:802px;top:586px;color:#A2734C">3</div>
<div class="t" style="left:820px;top:586px;color:#A2734C">апр 29 15:55</div>
<div class="t" style="left:10px;top:604px;color:#33DA7A">*write.sh</div>
<div class="t" style="left:325px;top:604px;color:#33DA7A">13</div>
<div class="t" style="left:352px;top:604px;color:#33DA7A">апр 30 09:41</div>
<div class="t" style="left:478px;top:604px;color:#33DA7A">*write.sh</div>
<div class="t" style="left:793px;top:604px;color:#33DA7A">13</div>
<div class="t" style="left:820px;top:604px;color:#33DA7A">апр 30 09:41</div>
<div class="t" style="left:10px;top:640px;color:#D0CFCC">UP--DIR</div>
<div class="t" style="left:478px;top:640px;color:#D0CFCC">UP--DIR</div>
<div class="t" style="left:325px;top:658px;color:#D0CFCC">11G/21G (52%)</div>
<div class="t" style="left:793px;top:658px;color:#D0CFCC">11G/21G (52%)</div>
<div class="t" style="left:1px;top:676px;color:#D0CFCC">Hint: Want your plain shell? Press C-o, and get back to MC with C-o again.</div>
<div class="t" style="left:1px;top:694px;color:#D0CFCC">sonik@sonik-vm:~$</div>
<div class="t" style="left:10px;top:712px;color:#FFFFFF">1</div>
<div class="t" style="left:19px;top:712px;color:#171421">Help</div>
<div class="t" style="left:100px;top:712px;color:#FFFFFF">2</div>
<div class="t" style="left:109px;top:712px;color:#171421">Menu</div>
<div class="t" style="left:190px;top:712px;color:#FFFFFF">3</div>
<div class="t" style="left:199px;top:712px;color:#171421">View</div>
<div class="t" style="left:280px;top:712px;color:#FFFFFF">4</div>
<div class="t" style="left:289px;top:712px;color:#171421">Edit</div>
<div class="t" style="left:379px;top:712px;color:#FFFFFF">5</div>
<div class="t" style="left:388px;top:712px;color:#171421">Copy</div>
<div class="t" style="left:478px;top:712px;color:#FFFFFF">6</div>
<div class="t" style="left:487px;top:712px;color:#171421">RenMov</div>
<div class="t" style="left:568px;top:712px;color:#FFFFFF">7</div>
<div class="t" style="left:577px;top:712px;color:#171421">Mkdir</div>
<div class="t" style="left:658px;top:712px;color:#FFFFFF">8</div>
<div class="t" style="left:667px;top:712px;color:#171421">Delete</div>
<div class="t" style="left:748px;top:712px;color:#FFFFFF">9</div>
<div class="t" style="left:757px;top:712px;color:#171421">PullDn</div>
<div class="t" style="left:838px;top:712px;color:#FFFFFF">10</div>
<div class="t" style="left:856px;top:712px;color:#171421">Quit</div>
<div class="b" style="left:943px;top:48px;width:6px;height:688px;border-radius:3px;background:#ABABAB"></div>
<div class="b" style="left:0;top:738px;width:951px;height:1px;background:#22051a"></div>
<div class="b" style="left:0;top:739px;width:951px;height:1px;background:#ECECEC"></div>
<div class="b" style="left:950px;top:45px;width:1px;height:693px;background:#28081e"></div>
<svg width="20" height="26" viewBox="0 0 20 26" style="left:86px;top:263px"><path d="M2.6 2.4v17l3.7-3.5 2.4 5 2.3-1-2.4-5.1h5.4z" fill="#222" stroke="#fff" stroke-width="1" stroke-linejoin="miter"/></svg>
</body></html>
